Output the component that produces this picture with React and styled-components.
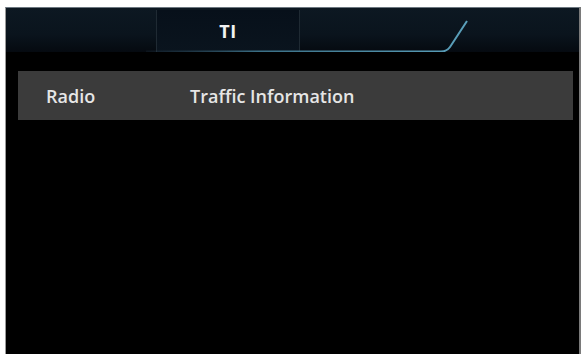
import React from 'react';
import styled, { createGlobalStyle } from 'styled-components';

const GlobalStyle = createGlobalStyle`
  html, body {
    margin: 0;
    padding: 0;
    background: #ffffff;
  }
  body {
    font-family: "Open Sans", "Noto Sans", sans-serif;
  }
`;

const Screen = styled.div`
  margin: 7px 3px 0 5px;
  height: 347px;
  background: #000;
  border-left: 1px solid #9a9a9a;
  border-right: 2px solid #7a7a7a;
  border-top: 1px solid #6c7780;
  display: flex;
  flex-direction: column;
  overflow: hidden;
`;

const Header = styled.div`
  position: relative;
  height: 44px;
  flex-shrink: 0;
  display: flex;
  padding-left: 150px;
  background: linear-gradient(180deg, #0d1822 0%, #0a141d 60%, #050a10 100%);
`;

const Tab = styled.div`
  width: 142px;
  margin-top: 2px;
  display: flex;
  align-items: center;
  justify-content: center;
  border-left: 1px solid #1f2a33;
  border-right: 1px solid #1f2a33;
  background: linear-gradient(180deg, #07101a 0%, #0a141e 100%);
  color: #f2f2f2;
  font-weight: 700;
  font-size: 18px;
  letter-spacing: 0.5px;
`;

const Accent = styled.svg`
  position: absolute;
  left: 0;
  top: 0;
  pointer-events: none;
`;

const Row = styled.div`
  margin: 19px 6px 0 12px;
  height: 49px;
  display: flex;
  align-items: center;
  padding-left: 28px;
  background: #3b3b3b;
  color: #e6e6e6;
  font-size: 18px;
  font-weight: 600;
`;

const Cell = styled.span`
  width: ${p => p.$w || 'auto'};
  flex-shrink: 0;
`;

export default function App() {
  return (
    <>
      <GlobalStyle />
      <Screen>
        <Header>
          <Tab>TI</Tab>
          <Accent width="578" height="44" viewBox="0 0 578 44">
            <defs>
              <linearGradient id="line" x1="0" y1="0" x2="1" y2="0">
                <stop offset="0" stopColor="#2a4050" stopOpacity="0.2" />
                <stop offset="0.35" stopColor="#3b6f85" />
                <stop offset="1" stopColor="#5aa0bb" />
              </linearGradient>
            </defs>
            <path
              d="M140 43.5 L435 43.5 Q441 43.5 444 39 L461 13"
              fill="none"
              stroke="url(#line)"
              strokeWidth="2"
            />
          </Accent>
        </Header>
        <Row>
          <Cell $w="144px">Radio</Cell>
          <Cell>Traffic Information</Cell>
        </Row>
      </Screen>
    </>
  );
}
